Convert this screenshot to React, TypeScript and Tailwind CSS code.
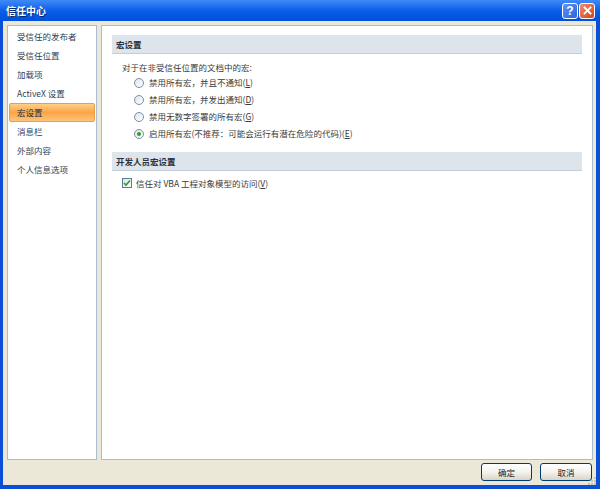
import React from "react";

const font = { fontFamily: '"Noto Sans CJK SC", "Noto Sans", sans-serif' };

const navItems = [
  "受信任的发布者",
  "受信任位置",
  "加载项",
  "ActiveX 设置",
  "宏设置",
  "消息栏",
  "外部内容",
  "个人信息选项",
];

function Radio({ checked }: { checked?: boolean }) {
  return (
    <span className="w-[10px] h-[10px] rounded-full border border-[#7a8fa6] bg-gradient-to-br from-[#dfe3e8] to-white flex items-center justify-center shrink-0">
      {checked && <span className="w-[4px] h-[4px] rounded-full bg-[#2aa02a]" />}
    </span>
  );
}

function Acc({ pre, k }: { pre: string; k: string }) {
  return (
    <span>
      {pre}(<u>{k}</u>)
    </span>
  );
}

export default function App() {
  return (
    <div
      className="w-[600px] h-[489px] flex flex-col bg-[#0a4fd6] overflow-hidden relative"
      style={font}
    >
      {/* Title bar */}
      <div className="h-[21px] flex items-center pl-[6px] pr-[5px] bg-gradient-to-b from-[#3d8bf8] via-[#0a5ee8] to-[#0050dc] shrink-0">
        <span className="text-white text-[10px] font-bold leading-none [text-shadow:1px_1px_0_#0a246a]">
          信任中心
        </span>
        <div className="ml-auto flex gap-[1px] items-center">
          <div className="w-[16px] h-[16px] rounded-[3px] border border-white bg-gradient-to-br from-[#5d94f4] to-[#2a63dc] flex items-center justify-center text-white text-[12px] font-bold leading-none" style={{ fontFamily: '"Liberation Sans", sans-serif' }}>
            ?
          </div>
          <div className="w-[16px] h-[16px] rounded-[3px] border border-white bg-gradient-to-br from-[#f08a6a] to-[#d6401a] flex items-center justify-center">
            <svg width="9" height="9" viewBox="0 0 9 9">
              <path d="M1.5 1.5 L7.5 7.5 M7.5 1.5 L1.5 7.5" stroke="white" strokeWidth="1.8" strokeLinecap="square" />
            </svg>
          </div>
        </div>
      </div>

      {/* Client */}
      <div className="flex-1 ml-[3px] mr-[4px] mb-[4px] bg-[#ebe8d8] flex flex-col pt-[4px] pl-[4px] pr-[3px] relative">
        <div className="flex-1 flex gap-[4px] min-h-0">
          {/* Left nav */}
          <div className="w-[90px] bg-white border border-[#a9bcd2] pt-[1px] px-[1px]">
            {navItems.map((t) => {
              const sel = t === "宏设置";
              return (
                <div
                  key={t}
                  className={
                    sel
                      ? "h-[19px] flex items-center pl-[7px] text-[8.5px] leading-none text-[#1f2f45] rounded-[2px] border border-[#e3a14a] bg-gradient-to-b from-[#fdd089] via-[#fba444] to-[#fcc47a]"
                      : "h-[19px] flex items-center pl-[8px] text-[8.5px] leading-none text-[#2c3f5a]"
                  }
                >
                  {t}
                </div>
              );
            })}
          </div>

          {/* Right content */}
          <div className="flex-1 bg-white border border-[#a9bcd2] pt-[9px] px-[10px]">
            <div className="h-[19px] bg-[#dde4eb] border-b border-[#c5ced8] flex items-center pl-[4px] text-[8.5px] font-bold text-[#2a3340]">
              宏设置
            </div>
            <div className="mt-[6px] h-[14px] flex items-center pl-[10px] text-[8.5px] text-[#3a3a3a] leading-none">
              对于在非受信任位置的文档中的宏:
            </div>
            <div className="flex flex-col pl-[22px] text-[8.5px] text-[#3a3a3a] leading-none">
              <div className="h-[17px] flex items-center gap-[5px]">
                <Radio />
                <Acc pre="禁用所有宏，并且不通知" k="L" />
              </div>
              <div className="h-[17px] flex items-center gap-[5px]">
                <Radio />
                <Acc pre="禁用所有宏，并发出通知" k="D" />
              </div>
              <div className="h-[17px] flex items-center gap-[5px]">
                <Radio />
                <Acc pre="禁用无数字签署的所有宏" k="G" />
              </div>
              <div className="h-[17px] flex items-center gap-[5px]">
                <Radio checked />
                <Acc pre="启用所有宏(不推荐：可能会运行有潜在危险的代码)" k="E" />
              </div>
            </div>

            <div className="mt-[10px] h-[19px] bg-[#dde4eb] border-b border-[#c5ced8] flex items-center pl-[4px] text-[8.5px] font-bold text-[#2a3340]">
              开发人员宏设置
            </div>
            <div className="mt-[4px] h-[16px] flex items-center gap-[4px] pl-[10px] text-[8.5px] text-[#3a3a3a] leading-none">
              <span className="w-[10px] h-[10px] border border-[#5a7aa0] bg-gradient-to-br from-[#dfe3e8] to-white flex items-center justify-center shrink-0">
                <svg width="8" height="8" viewBox="0 0 8 8">
                  <path d="M1 4 L3 6 L7 1.5" stroke="#21a121" strokeWidth="1.6" fill="none" />
                </svg>
              </span>
              <Acc pre="信任对 VBA 工程对象模型的访问" k="V" />
            </div>
          </div>
        </div>

        {/* Footer */}
        <div className="h-[25px] flex justify-end items-start pt-[3px] gap-[8px] pr-[1px] shrink-0">
          <button className="w-[51px] h-[18px] rounded-[3px] border border-[#003c74] bg-gradient-to-b from-white via-[#f4f3ee] to-[#d8d4c8] text-[8.5px] text-[#222] leading-none">
            确定
          </button>
          <button className="w-[52px] h-[18px] rounded-[3px] border border-[#003c74] bg-gradient-to-b from-white via-[#f4f3ee] to-[#d8d4c8] text-[8.5px] text-[#222] leading-none">
            取消
          </button>
        </div>

        <svg className="absolute right-[0px] bottom-[0px]" width="10" height="10" viewBox="0 0 10 10">
          <g fill="#c8c4b4">
            <rect x="8" y="2" width="2" height="2" />
            <rect x="5" y="5" width="2" height="2" />
            <rect x="8" y="5" width="2" height="2" />
            <rect x="2" y="8" width="2" height="2" />
            <rect x="5" y="8" width="2" height="2" />
            <rect x="8" y="8" width="2" height="2" />
          </g>
        </svg>
      </div>
    </div>
  );
}
